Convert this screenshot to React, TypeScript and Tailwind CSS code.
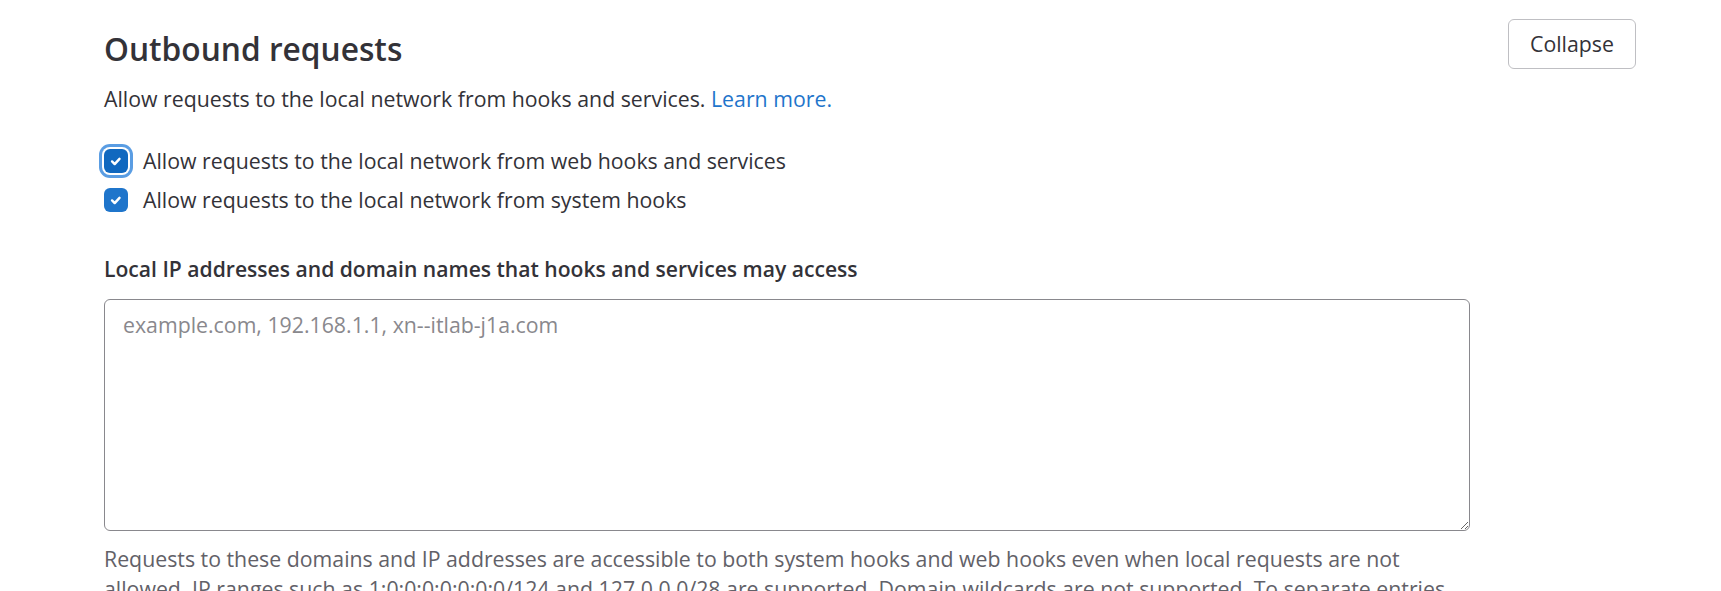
import React from 'react';

const Check: React.FC = () => (
  <svg viewBox="0 0 16 16" className="w-[14px] h-[14px]" fill="none">
    <path d="M3.5 8.5l3 3 5.5-6" stroke="#fff" strokeWidth="2.8" strokeLinecap="round" strokeLinejoin="round" />
  </svg>
);

const App: React.FC = () => {
  const options = [
    { id: 'web', label: 'Allow requests to the local network from web hooks and services', focused: true },
    { id: 'system', label: 'Allow requests to the local network from system hooks', focused: false },
  ];

  return (
    <div className="w-full h-[591px] overflow-hidden bg-white font-['Open_Sans',sans-serif] text-[#333238]">
      <div className="flex items-start pl-[104px] pr-[85px]">
        {/* Settings content */}
        <div className="w-[1366px] pt-[29px]">
          <h2 className="text-[31.7px] leading-[40px] font-semibold">Outbound requests</h2>
          <p className="mt-[15px] text-[21.3px] leading-[30px]">
            Allow requests to the local network from hooks and services.{' '}
            <a className="text-[#1f75cb]">Learn more.</a>
          </p>

          <div className="mt-[32px] flex flex-col gap-[9px]">
            {options.map((opt) => (
              <label key={opt.id} className="flex items-center gap-[15px] text-[21.3px] leading-[30px]">
                <span
                  className={
                    opt.focused
                      ? 'flex items-center justify-center w-[24px] h-[24px] rounded-[6px] bg-[#1068bf] shadow-[0_0_0_2px_#fff,0_0_0_5px_#5a9de3]'
                      : 'flex items-center justify-center w-[24px] h-[24px] rounded-[6px] bg-[#1f75cb]'
                  }
                >
                  <Check />
                </span>
                <span>{opt.label}</span>
              </label>
            ))}
          </div>

          <div className="mt-[39px] text-[21.1px] leading-[30px] font-semibold">
            Local IP addresses and domain names that hooks and services may access
          </div>
          <textarea
            className="mt-[15px] block w-full h-[232px] border border-[#89888d] rounded-[6px] px-[18px] py-[10px] text-[21.3px] leading-[30px] placeholder:text-[#89888d] outline-none"
            placeholder="example.com, 192.168.1.1, xn--itlab-j1a.com"
          />
          <p className="mt-[13px] text-[21.3px] leading-[30px] text-[#626168]">
            Requests to these domains and IP addresses are accessible to both system hooks and web hooks even when local
            requests are not allowed. IP ranges such as 1:0:0:0:0:0:0:0/124 and 127.0.0.0/28 are supported. Domain
            wildcards are not supported. To separate entries, use semicolons, commas, or new lines. The list can be up
            to 255 characters long.
          </p>
        </div>

        <button className="ml-auto mt-[19px] w-[128px] h-[50px] border border-[#bfbfc3] rounded-[6px] text-[21.3px] text-[#333238] bg-white">
          Collapse
        </button>
      </div>
    </div>
  );
};

export default App;
